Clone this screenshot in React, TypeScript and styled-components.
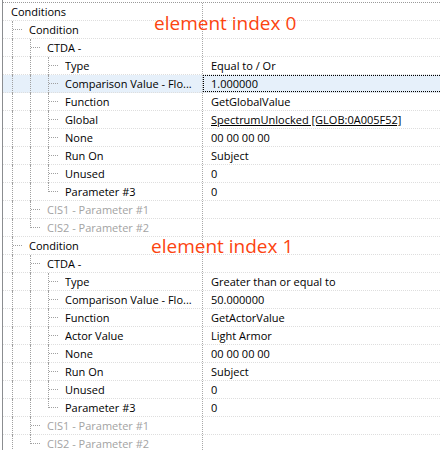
import React from "react";
import styled, { createGlobalStyle } from "styled-components";

const Global = createGlobalStyle`
  html, body { margin: 0; padding: 0; background: #ffffff; }
  body { font-family: "Open Sans", "Noto Sans", sans-serif; font-size: 11px; color: #000; overflow: hidden; }
`;

type GuideKind = "none" | "line" | "tee" | "ell";

interface RowData {
  label: string;
  value?: string;
  guides: GuideKind[];
  dim?: boolean;
  link?: boolean;
  selected?: boolean;
}

const Frame = styled.div`
  position: relative;
  margin-left: 2px;
  border-left: 1px solid #8b8d90;
  padding-top: 2px;
  height: 448px;
  overflow: hidden;
`;

const List = styled.div`
  border-top: 1px dotted #9a9a9a;
`;

const Row = styled.div<{ $selected?: boolean }>`
  display: flex;
  height: 17px;
  border-bottom: 1px dotted #dedede;
  background: ${(p) => (p.$selected ? "#e6f0fa" : "transparent")};
`;

const NameCell = styled.div`
  display: flex;
  align-items: stretch;
  width: 200px;
  flex: none;
  padding-left: 8px;
  box-sizing: border-box;
  border-right: 1px dotted #a8a8a8;
  position: relative;
`;

const Guide = styled.span<{ $kind: GuideKind }>`
  position: relative;
  flex: none;
  width: 18px;
  &::before {
    content: "";
    display: ${(p) => (p.$kind === "none" ? "none" : "block")};
    position: absolute;
    left: 1px;
    top: 0;
    height: ${(p) => (p.$kind === "ell" ? "9px" : "18px")};
    border-left: 1px dotted #a0a0a0;
  }
  &::after {
    content: "";
    display: ${(p) => (p.$kind === "tee" || p.$kind === "ell" ? "block" : "none")};
    position: absolute;
    left: 2px;
    top: 8px;
    width: 9px;
    border-top: 1px dotted #a0a0a0;
  }
`;

const Label = styled.span<{ $dim?: boolean }>`
  flex: 1;
  min-width: 0;
  line-height: 17px;
  white-space: nowrap;
  overflow: hidden;
  padding-right: 2px;
  color: ${(p) => (p.$dim ? "#a3a3a3" : "#000")};
`;

const ValueCell = styled.div<{ $focus?: boolean }>`
  flex: 1;
  min-width: 0;
  box-sizing: border-box;
  padding-left: 7px;
  white-space: nowrap;
  overflow: hidden;
  border: 1px dotted ${(p) => (p.$focus ? "#000" : "transparent")};
  border-right: none;
  line-height: 15px;
`;

const Link = styled.span`
  text-decoration: underline;
`;

const Note = styled.div`
  position: absolute;
  font-family: "Open Sans", "Noto Sans", sans-serif;
  font-size: 19px;
  line-height: 19px;
  color: #fc4410;
  white-space: nowrap;
`;

const block = (first: boolean): RowData[] => [
  { label: "Condition", guides: ["tee"] },
  { label: "CTDA -", guides: ["line", "tee"] },
  { label: "Type", value: first ? "Equal to / Or" : "Greater than or equal to", guides: ["line", "line", "tee"] },
  {
    label: "Comparison Value - Flo...",
    value: first ? "1.000000" : "50.000000",
    guides: ["line", "line", "tee"],
    selected: first,
  },
  { label: "Function", value: first ? "GetGlobalValue" : "GetActorValue", guides: ["line", "line", "tee"] },
  first
    ? { label: "Global", value: "SpectrumUnlocked [GLOB:0A005F52]", link: true, guides: ["line", "line", "tee"] }
    : { label: "Actor Value", value: "Light Armor", guides: ["line", "line", "tee"] },
  { label: "None", value: "00 00 00 00", guides: ["line", "line", "tee"] },
  { label: "Run On", value: "Subject", guides: ["line", "line", "tee"] },
  { label: "Unused", value: "0", guides: ["line", "line", "tee"] },
  { label: "Parameter #3", value: "0", guides: ["line", "line", "ell"] },
  { label: "CIS1 - Parameter #1", guides: ["line", "tee"], dim: true },
  { label: "CIS2 - Parameter #2", guides: ["line", "ell"], dim: true },
];

const rows: RowData[] = [
  { label: "Conditions", guides: [] },
  ...block(true),
  ...block(false),
];

export default function App() {
  return (
    <>
      <Global />
      <Frame>
        <List>
          {rows.map((r, i) => (
            <Row key={i} $selected={r.selected}>
              <NameCell>
                {r.guides.map((g, j) => (
                  <Guide key={j} $kind={g} />
                ))}
                <Label $dim={r.dim}>{r.label}</Label>
              </NameCell>
              <ValueCell $focus={r.selected}>
                {r.link ? <Link>{r.value}</Link> : r.value}
              </ValueCell>
            </Row>
          ))}
        </List>
        <Note style={{ left: 151, top: 14 }}>element index 0</Note>
        <Note style={{ left: 148, top: 237 }}>element index 1</Note>
      </Frame>
    </>
  );
}
